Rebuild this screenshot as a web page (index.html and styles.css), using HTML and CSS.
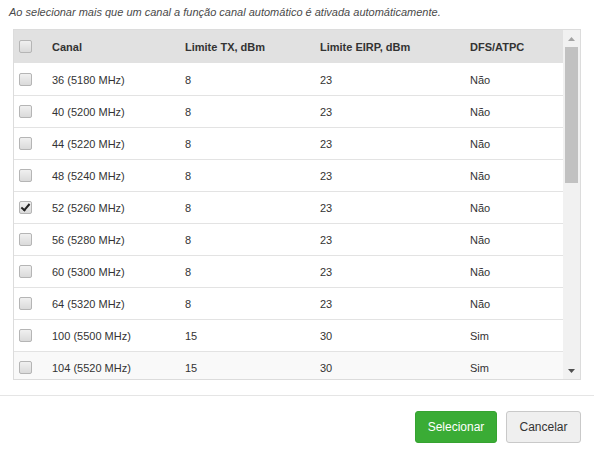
FILE: index.html
```html
<!DOCTYPE html>
<html lang="pt">
<head>
<meta charset="utf-8">
<link rel="stylesheet" href="styles.css">
</head>
<body>
<div class="dialog">
  <p class="note">Ao selecionar mais que um canal a função canal automático é ativada automáticamente.</p>
  <div class="list">
    <div class="viewport">
      <table class="grid">
        <colgroup>
          <col class="c-check"><col class="c-canal"><col class="c-tx"><col class="c-eirp"><col class="c-dfs">
        </colgroup>
        <thead>
          <tr><th><span class="cb"></span></th><th>Canal</th><th>Limite TX, dBm</th><th>Limite EIRP, dBm</th><th>DFS/ATPC</th></tr>
        </thead>
        <tbody>
          <tr><td><span class="cb"></span></td><td>36 (5180 MHz)</td><td>8</td><td>23</td><td>Não</td></tr>
          <tr><td><span class="cb"></span></td><td>40 (5200 MHz)</td><td>8</td><td>23</td><td>Não</td></tr>
          <tr><td><span class="cb"></span></td><td>44 (5220 MHz)</td><td>8</td><td>23</td><td>Não</td></tr>
          <tr><td><span class="cb"></span></td><td>48 (5240 MHz)</td><td>8</td><td>23</td><td>Não</td></tr>
          <tr><td><span class="cb cb-on"></span></td><td>52 (5260 MHz)</td><td>8</td><td>23</td><td>Não</td></tr>
          <tr><td><span class="cb"></span></td><td>56 (5280 MHz)</td><td>8</td><td>23</td><td>Não</td></tr>
          <tr><td><span class="cb"></span></td><td>60 (5300 MHz)</td><td>8</td><td>23</td><td>Não</td></tr>
          <tr><td><span class="cb"></span></td><td>64 (5320 MHz)</td><td>8</td><td>23</td><td>Não</td></tr>
          <tr><td><span class="cb"></span></td><td>100 (5500 MHz)</td><td>15</td><td>30</td><td>Sim</td></tr>
          <tr class="hover"><td><span class="cb"></span></td><td>104 (5520 MHz)</td><td>15</td><td>30</td><td>Sim</td></tr>
        </tbody>
      </table>
    </div>
    <div class="scrollbar">
      <div class="sb-btn">
        <svg width="7" height="4" viewBox="0 0 7 4"><polygon points="0,4 3.5,0 7,4" fill="#a3a3a3"/></svg>
      </div>
      <div class="sb-track"><div class="sb-thumb"></div></div>
      <div class="sb-btn">
        <svg width="7" height="4" viewBox="0 0 7 4"><polygon points="0,0 7,0 3.5,4" fill="#505050"/></svg>
      </div>
    </div>
  </div>
  <div class="footer">
    <button class="btn btn-primary" type="button">Selecionar</button>
    <button class="btn btn-default" type="button">Cancelar</button>
  </div>
</div>
</body>
</html>
```

FILE: styles.css
```css
html, body {
  margin: 0;
  padding: 0;
  background: #fff;
}
body {
  font-family: "Liberation Sans", Arial, sans-serif;
  color: #333;
  font-size: 11px;
}
.note {
  margin: 0;
  padding: 6px 9px 0 9px;
  height: 17px;
  line-height: 13px;
  font-style: italic;
  font-size: 11px;
  color: #4a4a4a;
}
.list {
  margin: 6px 13px 0 13px;
  height: 349px;
  border: 1px solid #dcdcdc;
  display: flex;
  overflow: hidden;
}
.viewport {
  flex: 1;
  overflow: hidden;
}
.scrollbar {
  width: 17px;
  flex: none;
  background: #f1f1f1;
  display: flex;
  flex-direction: column;
}
.sb-btn {
  height: 17px;
  flex: none;
  display: flex;
  align-items: center;
  justify-content: center;
}
.sb-track {
  flex: 1;
  padding: 0 2px;
}
.sb-thumb {
  height: 136px;
  background: #c1c1c1;
}
.grid {
  width: 100%;
  border-collapse: collapse;
  table-layout: fixed;
}
.c-check { width: 38px; }
.c-canal { width: 133px; }
.c-tx { width: 135px; }
.c-eirp { width: 150px; }
.c-dfs { width: 93px; }
.grid th {
  background: #e1e1e1;
  height: 33px;
  padding: 0;
  text-align: left;
  font-weight: bold;
  font-size: 11px;
  color: #333;
  border-bottom: 1px solid #fff;
}
.grid thead tr {
  border-bottom: 1px solid #e6e6e6;
}
.grid td {
  height: 31px;
  padding: 0;
  border-bottom: 1px solid #e3e3e3;
  font-size: 11px;
  color: #333;
}
.grid tr.hover td {
  background: #f9f9f9;
}
.grid th:first-child,
.grid td:first-child {
  padding-left: 5px;
}
.cb {
  display: block;
  width: 11px;
  height: 11px;
  border: 1px solid #b5b5b5;
  border-radius: 2px;
  background: linear-gradient(#f0f0f0, #dadada);
  position: relative;
}
.cb-on::after {
  content: "";
  position: absolute;
  left: 3px;
  top: 0px;
  width: 3px;
  height: 7px;
  border: solid #222;
  border-width: 0 2px 2px 0;
  transform: rotate(40deg);
}
.footer {
  margin-top: 15px;
  border-top: 1px solid #e5e5e5;
  padding: 15px 13px 0 0;
  display: flex;
  justify-content: flex-end;
  gap: 9px;
}
.btn {
  font-family: "Liberation Sans", Arial, sans-serif;
  font-size: 12px;
  height: 32px;
  border-radius: 3px;
  padding: 0;
  cursor: pointer;
}
.btn-primary {
  background: #3aac35;
  border: 1px solid #36a331;
  color: #fff;
  width: 82px;
}
.btn-default {
  background: #efefef;
  border: 1px solid #c9c9c9;
  color: #333;
  width: 75px;
}
```
